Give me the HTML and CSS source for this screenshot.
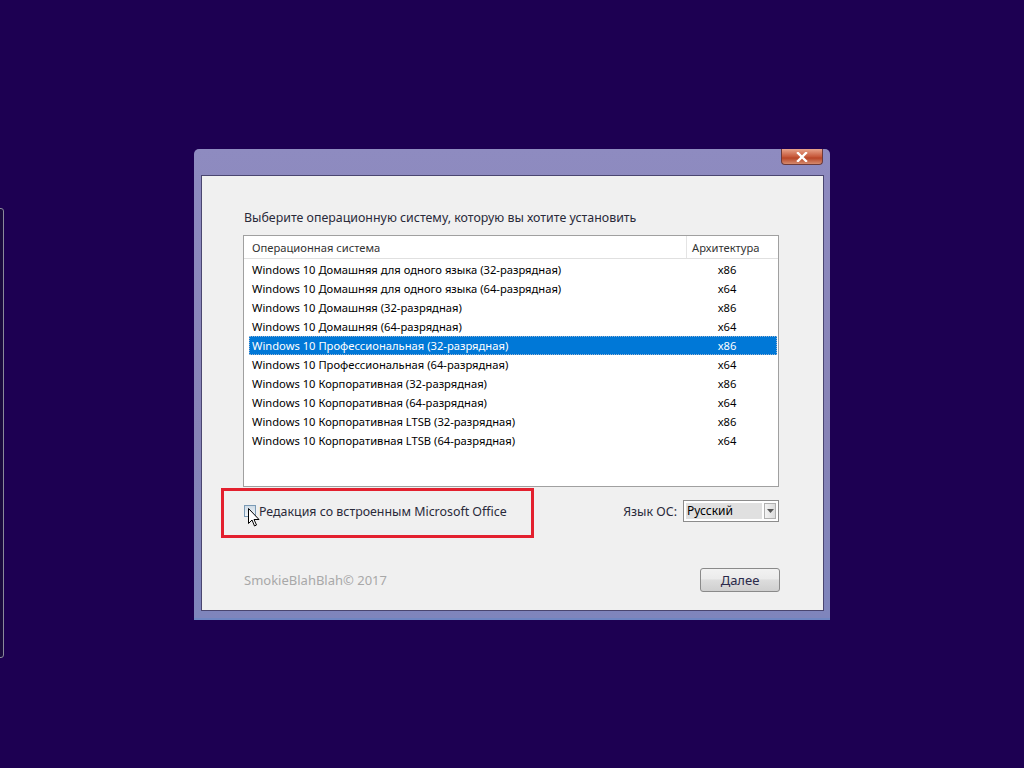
FILE: index.html
```html
<!DOCTYPE html>
<html lang="ru">
<head>
  <meta charset="UTF-8">
  <title>Установка Windows</title>
  <link rel="stylesheet" href="styles.css">
</head>
<body>
  <div class="edge-window"></div>

  <div class="window">
    <div class="titlebar">
      <div class="close">
        <svg width="14" height="10" viewBox="0 0 14 10">
          <path d="M3 1 L11 9 M11 1 L3 9" stroke="#fff" stroke-width="2.4" stroke-linecap="square"/>
        </svg>
      </div>
    </div>
    <div class="content">
      <p class="prompt">Выберите операционную систему, которую вы хотите установить</p>

      <div class="listbox">
        <div class="list-header">
          <div class="col-name">Операционная система</div>
          <div class="col-arch">Архитектура</div>
        </div>
        <div class="rows">
          <div class="row"><span class="col-name">Windows 10 Домашняя для одного языка (32-разрядная)</span><span class="col-arch">x86</span></div>
          <div class="row"><span class="col-name">Windows 10 Домашняя для одного языка (64-разрядная)</span><span class="col-arch">x64</span></div>
          <div class="row"><span class="col-name">Windows 10 Домашняя (32-разрядная)</span><span class="col-arch">x86</span></div>
          <div class="row"><span class="col-name">Windows 10 Домашняя (64-разрядная)</span><span class="col-arch">x64</span></div>
          <div class="row selected"><span class="col-name">Windows 10 Профессиональная (32-разрядная)</span><span class="col-arch">x86</span></div>
          <div class="row"><span class="col-name">Windows 10 Профессиональная (64-разрядная)</span><span class="col-arch">x64</span></div>
          <div class="row"><span class="col-name">Windows 10 Корпоративная (32-разрядная)</span><span class="col-arch">x86</span></div>
          <div class="row"><span class="col-name">Windows 10 Корпоративная (64-разрядная)</span><span class="col-arch">x64</span></div>
          <div class="row"><span class="col-name">Windows 10 Корпоративная LTSB (32-разрядная)</span><span class="col-arch">x86</span></div>
          <div class="row"><span class="col-name">Windows 10 Корпоративная LTSB (64-разрядная)</span><span class="col-arch">x64</span></div>
        </div>
      </div>

      <div class="options">
        <div class="office-option">
          <span class="checkbox"></span>
          <span>Редакция со встроенным Microsoft Office</span>
          <svg class="cursor" width="12" height="19" viewBox="0 0 12 19">
            <path d="M0.5 0.5 L0.5 15.5 L4 12 L6.5 18 L8.5 17 L6 11.5 L11 11.5 Z" fill="#fff" stroke="#000" stroke-width="1"/>
          </svg>
        </div>
        <div class="lang">
          <span>Язык ОС:</span>
          <div class="select">
            <span class="select-value">Русский</span>
            <span class="select-btn">
              <svg width="7" height="4" viewBox="0 0 7 4"><path d="M0 0 L7 0 L3.5 4 Z" fill="#555"/></svg>
            </span>
          </div>
        </div>
      </div>

      <div class="footer">
        <span class="credit">SmokieBlahBlah© 2017</span>
        <button class="next">Далее</button>
      </div>
    </div>
  </div>
</body>
</html>
```

FILE: styles.css
```css
body {
  margin: 0;
  width: 1024px;
  height: 768px;
  background-color: #1d0052;
  font-family: "Noto Sans", "DejaVu Sans", sans-serif;
  font-size: 12.4px;
  overflow: hidden;
  position: relative;
}
.edge-window {
  position: absolute;
  left: -6px;
  top: 208px;
  width: 8px;
  height: 448px;
  border: 1px solid #8a8a9a;
  border-radius: 3px;
  background-color: #1a0a3e;
}
.window {
  position: absolute;
  left: 194px;
  top: 149px;
  width: 636px;
  height: 471px;
  box-sizing: border-box;
  padding: 0 6px 7px 7px;
  background: linear-gradient(#8e8bc0, #8783b6 60%, #7f85bc);
  border-radius: 5px 5px 0 0;
  border-bottom: 2px solid #6f86c2;
  display: flex;
  flex-direction: column;
}
.titlebar {
  height: 26px;
  display: flex;
  justify-content: flex-end;
  align-items: flex-start;
}
.close {
  width: 42px;
  height: 16px;
  margin-right: 1px;
  border: 1px solid #6c3a3a;
  border-top: none;
  border-radius: 0 0 4px 4px;
  background: linear-gradient(#e8a48c, #c75a3c 50%, #b84628 60%, #d58a6e);
  display: flex;
  justify-content: center;
  align-items: center;
  box-sizing: border-box;
}
.content {
  flex: 1;
  background-color: #f0f0f0;
  border: 1px solid #4a4670;
  padding: 0 44px 0 41px;
  display: flex;
  flex-direction: column;
}
.prompt {
  margin: 32px 0 0 1px;
  height: 20px;
  line-height: 20px;
  color: #2a2a3a;
}
.listbox {
  margin-top: 7px;
  height: 252px;
  box-sizing: border-box;
  background-color: #fff;
  border: 1px solid #a0a0a0;
  display: flex;
  flex-direction: column;
  font-size: 11.2px;
}
.list-header {
  display: flex;
  height: 23px;
  line-height: 23px;
  border-bottom: 1px solid #e0e0e0;
  box-sizing: border-box;
  color: #333;
}
.list-header .col-name {
  flex: 1;
  padding-left: 8px;
  border-right: 1px solid #e4e4e4;
}
.list-header .col-arch {
  width: 86px;
  padding-left: 5px;
}
.rows {
  padding: 1px 1px 0 4px;
}
.row {
  display: flex;
  height: 19px;
  line-height: 19px;
  color: #000;
  box-sizing: border-box;
}
.row .col-name {
  flex: 1;
  padding-left: 4px;
}
.row .col-arch {
  width: 90px;
  text-align: center;
  padding-right: 5px;
}
.row.selected {
  background-color: #0078d7;
  color: #fff;
  outline: 1px dotted #99b4d1;
  outline-offset: -1px;
  margin-left: 1px;
}
.row.selected .col-name {
  padding-left: 3px;
}
.options {
  display: flex;
  justify-content: space-between;
  align-items: center;
  margin-top: 13px;
  height: 22px;
}
.office-option {
  position: relative;
  display: flex;
  align-items: center;
  gap: 3px;
  color: #2a2a3a;
  padding-left: 1px;
}
.office-option::before {
  content: "";
  position: absolute;
  left: -22px;
  top: -15px;
  width: 307px;
  height: 44px;
  border: 3px solid #e3202e;
}
.checkbox {
  width: 10px;
  height: 10px;
  border: 1px solid #7a9ab5;
  background: linear-gradient(#cfdbe6, #f2f6fa);
}
.cursor {
  position: absolute;
  left: 5px;
  top: 5px;
}
.lang {
  display: flex;
  align-items: center;
  gap: 6px;
  color: #2a2a3a;
}
.select {
  width: 96px;
  height: 22px;
  box-sizing: border-box;
  border: 1px solid #8c8c8c;
  background-color: #fff;
  display: flex;
  padding: 2px;
  font-size: 12px;
}
.select-value {
  flex: 1;
  background-color: #e0e0e0;
  line-height: 16px;
  padding-left: 1px;
  color: #000;
}
.select-btn {
  width: 10px;
  margin-left: 2px;
  border: 1px solid #b0b0b0;
  background: linear-gradient(90deg, #f4f4f4, #dcdcdc);
  display: flex;
  justify-content: center;
  align-items: center;
}
.footer {
  display: flex;
  justify-content: space-between;
  align-items: center;
  margin-top: 46px;
}
.credit {
  color: #a8a8a8;
  font-size: 13px;
  margin-left: 1px;
}
.next {
  width: 80px;
  height: 24px;
  font-family: inherit;
  font-size: 13px;
  color: #2a2a4a;
  border: 1px solid #8a8a8a;
  border-radius: 3px;
  background: linear-gradient(#f2f2f2 0%, #ebebeb 45%, #dddddd 50%, #cfcfcf 100%);
  margin-right: -1px;
}
```
